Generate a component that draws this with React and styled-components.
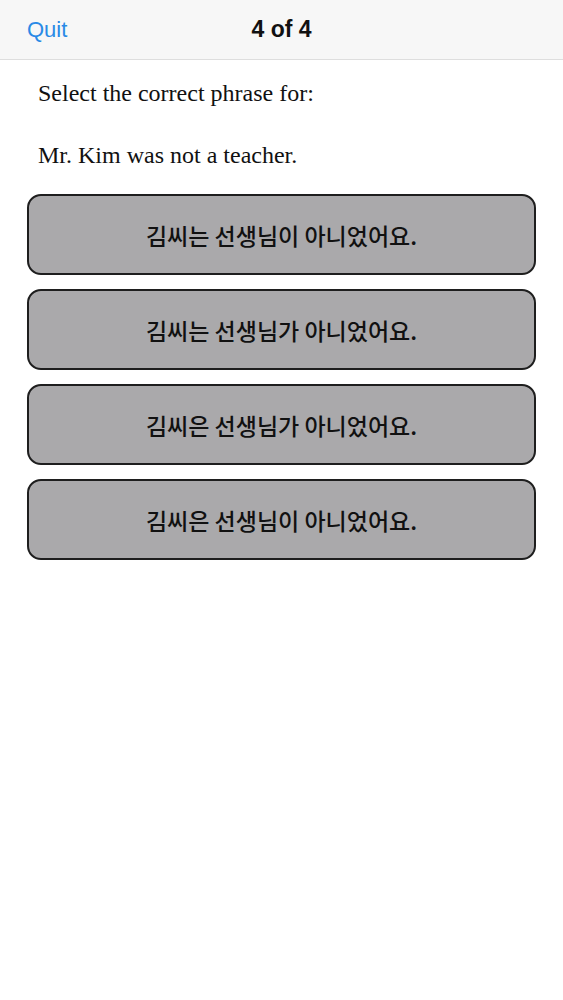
import styled, { createGlobalStyle } from "styled-components";

const GlobalStyle = createGlobalStyle`
  html, body {
    margin: 0;
    padding: 0;
    background: #ffffff;
  }
  * {
    box-sizing: border-box;
  }
`;

const Page = styled.div`
  width: 563px;
  min-height: 1000px;
  background: #ffffff;
`;

const NavBar = styled.header`
  height: 60px;
  display: grid;
  grid-template-columns: 1fr auto 1fr;
  align-items: center;
  padding: 0 27px;
  background: #f7f7f7;
  border-bottom: 1px solid #dedede;
  font-family: "Liberation Sans", Arial, sans-serif;
`;

const QuitButton = styled.button`
  justify-self: start;
  border: none;
  background: none;
  padding: 0;
  font-family: inherit;
  font-size: 22px;
  color: #2a8ae6;
  cursor: pointer;
`;

const Title = styled.h1`
  margin: 0;
  font-size: 23px;
  font-weight: bold;
  color: #111111;
`;

const Content = styled.main`
  display: flex;
  flex-direction: column;
  padding: 19px 27px 0;
`;

const Prompt = styled.p`
  margin: 0 0 0 11px;
  font-family: "Liberation Serif", "Times New Roman", serif;
  font-size: 24px;
  line-height: 28px;
  color: #111111;
  & + & {
    margin-top: 34px;
  }
`;

const Options = styled.div`
  display: flex;
  flex-direction: column;
  gap: 14px;
  margin-top: 25px;
`;

const Option = styled.button`
  height: 81px;
  width: 100%;
  display: flex;
  align-items: center;
  justify-content: center;
  background: #aaa9ab;
  border: 2px solid #1e1e1e;
  border-radius: 14px;
  font-family: "Noto Sans CJK KR", "Noto Sans", sans-serif;
  font-size: 23px;
  font-weight: 500;
  color: #111111;
  cursor: pointer;
`;

const choices = [
  "김씨는 선생님이 아니었어요.",
  "김씨는 선생님가 아니었어요.",
  "김씨은 선생님가 아니었어요.",
  "김씨은 선생님이 아니었어요.",
];

function App() {
  return (
    <>
      <GlobalStyle />
      <Page>
        <NavBar>
          <QuitButton>Quit</QuitButton>
          <Title>4 of 4</Title>
        </NavBar>
        <Content>
          <Prompt>Select the correct phrase for:</Prompt>
          <Prompt>Mr. Kim was not a teacher.</Prompt>
          <Options>
            {choices.map((c) => (
              <Option key={c}>{c}</Option>
            ))}
          </Options>
        </Content>
      </Page>
    </>
  );
}

export default App;
